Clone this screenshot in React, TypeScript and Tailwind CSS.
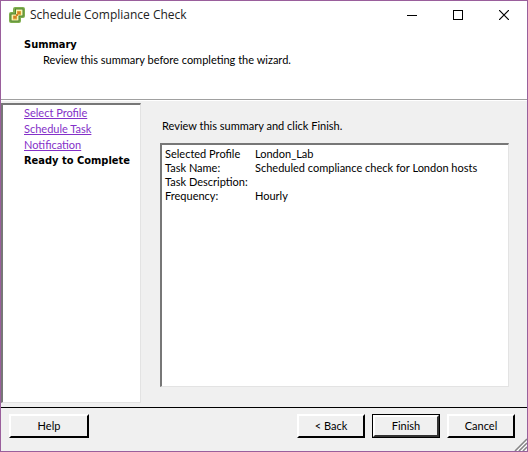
import type { ReactNode } from "react";

interface Step {
  label: string;
  href: string;
}

interface SummaryRow {
  label: string;
  value: string;
}

const steps: Step[] = [
  { label: "Select Profile", href: "#profile" },
  { label: "Schedule Task", href: "#schedule" },
  { label: "Notification", href: "#notification" },
];

const summary: SummaryRow[] = [
  { label: "Selected Profile", value: "London_Lab" },
  { label: "Task Name:", value: "Scheduled compliance check for London hosts" },
  { label: "Task Description:", value: "" },
  { label: "Frequency:", value: "Hourly" },
];

function AppIcon() {
  return (
    <svg width="16" height="16" viewBox="0 0 16 16" aria-hidden="true">
      <path
        d="M6 0h8a2 2 0 0 1 2 2v7a2 2 0 0 1-2 2h-2v3a2 2 0 0 1-2 2H2a2 2 0 0 1-2-2V7a2 2 0 0 1 2-2h2V2a2 2 0 0 1 2-2z"
        fill="#7fae4e"
      />
      <path d="M6 1.500h8.500v8H10.500v5h-9V6.500H6z" fill="#4f8230" />
      <path d="M7 2.500h6.500v6H9.500v5h-7V7.500H7z" fill="#fbf3b0" />
      <path d="M8 4h4v4H8z" fill="#e9b544" />
      <path d="M4 8.500h4v4H4z" fill="#e9b544" />
      <path d="M8.500 4.500h3V7h-3zM4.500 9h3v2.500h-3zM7 7h2v2H7z" fill="#cf7f2a" />
    </svg>
  );
}

function TitleBar() {
  return (
    <div className="flex h-7 items-center bg-white pl-2">
      <AppIcon />
      <h1 className="ml-[5px] flex-1 font-['Open_Sans',sans-serif] text-[12px] leading-4 text-[#222]">
        Schedule Compliance Check
      </h1>
      <div className="flex">
        <button aria-label="Minimize" className="flex h-7 w-[46px] items-center justify-center">
          <svg width="10" height="10" viewBox="0 0 10 10" shapeRendering="crispEdges">
            <path d="M0 5.500h10" stroke="#000" />
          </svg>
        </button>
        <button aria-label="Maximize" className="flex h-7 w-[46px] items-center justify-center">
          <svg width="10" height="10" viewBox="0 0 10 10" shapeRendering="crispEdges">
            <rect x="0.500" y="0.500" width="9" height="9" fill="none" stroke="#000" />
          </svg>
        </button>
        <button aria-label="Close" className="flex h-7 w-[46px] items-center justify-center">
          <svg width="10" height="10" viewBox="0 0 10 10">
            <path d="M0 0l10 10M10 0L0 10" stroke="#000" strokeWidth="1.200" />
          </svg>
        </button>
      </div>
    </div>
  );
}

function WizardButton({ children, wide }: { children: ReactNode; wide?: boolean }) {
  return (
    <button
      className={`h-6 border-2 border-t-white border-r-black border-b-black border-l-white bg-[#f0f0f0] text-center ${
        wide ? "w-20" : "w-[68px]"
      }`}
    >
      {children}
    </button>
  );
}

function ResizeGrip() {
  return (
    <svg
      className="absolute right-0 bottom-0"
      width="13"
      height="13"
      viewBox="0 0 13 13"
      aria-hidden="true"
    >
      <path d="M1 13L13 1M5 13l8-8M9 13l4-4" stroke="#858585" strokeWidth="1.500" />
      <path d="M3 13L13 3M7 13l6-6M11 13l2-2" stroke="#fff" />
    </svg>
  );
}

export default function App() {
  return (
    <div className="relative flex min-h-screen flex-col border border-[#9a5f9c] bg-[#f0f0f0] font-[Lato,sans-serif] text-[11px] leading-[14px] text-black">
      <TitleBar />

      <header className="h-[71px] border-b border-[#a0a0a0] bg-white pt-2 pl-[23px]">
        <h2 className="font-['DejaVu_Sans_Condensed',sans-serif] leading-4 font-bold">Summary</h2>
        <p className="pl-[19px]">Review this summary before completing the wizard.</p>
      </header>

      <div className="flex flex-1 border-t border-white pt-[2px] pb-1">
        <nav className="w-[140px] border-t-2 border-r border-b border-l-2 border-t-[#777] border-r-[#e3e3e3] border-b-[#e3e3e3] border-l-[#777] bg-white pl-[21px] leading-4">
          <ul>
            {steps.map((step) => (
              <li key={step.label}>
                <a href={step.href} className="text-[#8430c8] underline">
                  {step.label}
                </a>
              </li>
            ))}
            <li
              className="font-['DejaVu_Sans_Condensed',sans-serif] font-bold whitespace-nowrap"
              aria-current="step"
            >
              Ready to Complete
            </li>
          </ul>
        </nav>

        <main className="flex flex-1 flex-col pt-4 pr-[18px] pb-4 pl-[19px]">
          <p className="mb-[10px] pl-[2px]">Review this summary and click Finish.</p>
          <div className="flex-1 border-t-2 border-r border-b border-l-2 border-t-[#777] border-r-[#e3e3e3] border-b-[#e3e3e3] border-l-[#777] bg-white px-[3px] pt-[2px]">
            <table>
              <tbody>
                {summary.map((row) => (
                  <tr key={row.label} className="h-[14px]">
                    <th scope="row" className="w-[90px] text-left font-normal whitespace-nowrap">
                      {row.label}
                    </th>
                    <td>{row.value}</td>
                  </tr>
                ))}
              </tbody>
            </table>
          </div>
        </main>
      </div>

      <footer className="flex h-11 items-start border-t border-black pt-[6px] pr-3 pl-2">
        <WizardButton wide>Help</WizardButton>
        <div className="ml-auto flex gap-[7px]">
          <WizardButton>&lt; Back</WizardButton>
          <button className="h-6 w-[68px] border border-black text-center">
            <span className="block h-[22px] border-2 border-t-white border-r-[#333] border-b-[#333] border-l-white bg-[#f0f0f0] leading-[18px]">
              Finish
            </span>
          </button>
          <WizardButton>Cancel</WizardButton>
        </div>
      </footer>
      <ResizeGrip />
    </div>
  );
}
